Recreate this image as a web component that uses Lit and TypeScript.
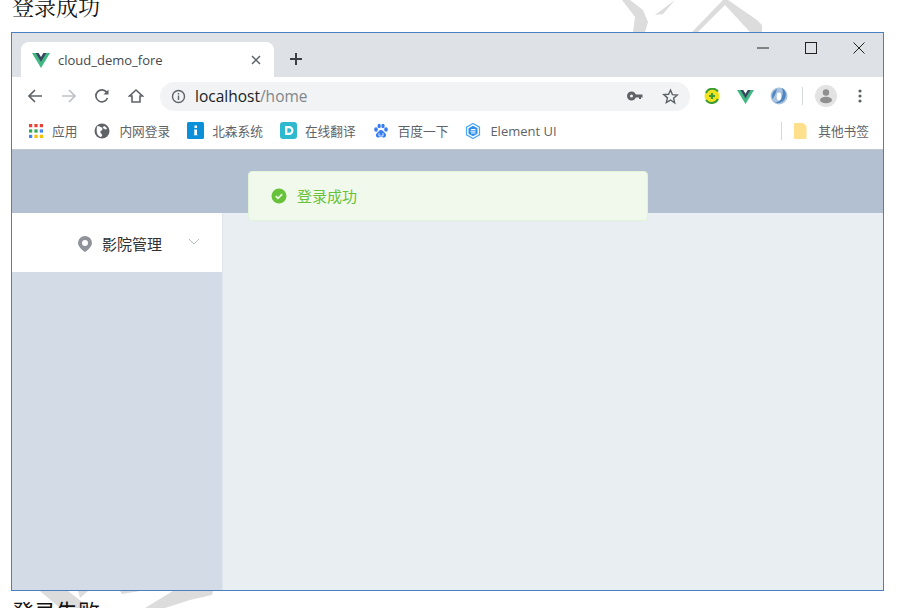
import { LitElement, html, css, svg } from "lit";
import { customElement } from "lit/decorators.js";

const vue = (s: number) => html`<svg width=${s} height=${s} viewBox="0 0 18 18"><path d="M0 2h4l5 8.5L14 2h4L9 17z" fill="#41b883"/><path d="M3.6 2h3L9 6l2.4-4h3L9 11z" fill="#35495e"/></svg>`;

const bookmarks = [
  { label: "应用", icon: svg`<g fill="#e94235"><rect x="0" y="0" width="3" height="3"/><rect x="5" y="0" width="3" height="3"/><rect x="10" y="0" width="3" height="3"/></g><g fill="#34a853"><rect x="0" y="5" width="3" height="3"/><rect x="5" y="5" width="3" height="3"/></g><rect x="10" y="5" width="3" height="3" fill="#4285f4"/><g fill="#fbbc05"><rect x="5" y="10" width="3" height="3"/><rect x="10" y="10" width="3" height="3"/></g><rect x="0" y="10" width="3" height="3" fill="#4285f4"/>`, w: 14, gap: 9, vb: "0 0 13 13" },
  { label: "内网登录", icon: svg`<circle cx="8" cy="8" r="7.5" fill="#5f6368"/><path d="M3.500 3c1.500 0 3 1 4 1.500S9 7 7.500 7.500 6 10 7.500 11 8 13 7 14C5 13.500 3.500 12 3 10S2.500 4.500 3.500 3zM10 3c1.500.5 2.500 1.500 3 3l-2 .5-1-1-1.500-.5z" fill="#fff"/>`, w: 16, gap: 9, vb: "0 0 16 16" },
  { label: "北森系统", icon: svg`<rect width="17" height="17" rx="1.500" fill="#0a8fd8"/><path d="M7.500 3.500h2.500v2.500H7.500zM7 7.500h3v5l1 .8H6.500l.8-.8V8.500z" fill="#fff"/>`, w: 17, gap: 8, vb: "0 0 17 17" },
  { label: "在线翻译", icon: svg`<rect width="17" height="17" rx="3" fill="#2fb9cf"/><path d="M5 4h4a4.500 4.500 0 0 1 0 9H5zm2.300 2.200v4.600H9a2.300 2.300 0 0 0 0-4.600z" fill="#fff"/>`, w: 17, gap: 8, vb: "0 0 17 17" },
  { label: "百度一下", icon: svg`<g fill="#3a7df0"><ellipse cx="3" cy="6" rx="1.800" ry="2.300"/><ellipse cx="6.200" cy="2.500" rx="1.700" ry="2.200"/><ellipse cx="10" cy="2.500" rx="1.700" ry="2.200"/><ellipse cx="13" cy="6" rx="1.800" ry="2.300"/><path d="M8 6.500c2 0 2.500 2 4 3s1.500 4.500-1 4.500c-1.500 0-2-.5-3-.5s-1.500.5-3 .5c-2.500 0-2.500-3.500-1-4.500s2-3 4-3z"/></g><path d="M6 9.500v3h4v-3" fill="none" stroke="#fff" stroke-width=".8"/>`, w: 16, gap: 9, vb: "0 0 16 15" },
  { label: "Element UI", icon: svg`<path d="M8 .5l6.500 3.700v7.600L8 15.500l-6.500-3.700V4.200z" fill="#fff" stroke="#4aa8f5" stroke-width="1.200"/><path d="M8 2.800l4.500 2.500v5.400L8 13.200l-4.500-2.500V5.300z" fill="#2f8ff0"/><path d="M6 6.500h4.500M5.500 8.200h5M6 10h4.500" stroke="#fff" stroke-width="1"/>`, w: 16, gap: 9, vb: "0 0 16 16" },
];

@customElement("app-root")
export class AppRoot extends LitElement {
  static styles = css`
    :host { display: block; position: relative; width: 916px; height: 608px; overflow: hidden; background: #fff;
      font-family: "Noto Sans CJK SC", "Noto Sans", sans-serif; }
    .watermark { position: absolute; left: 0; top: 0; }
    .caption { position: relative; height: 32px; padding-left: 12px; font: 22px/16px "Liberation Serif", "Noto Serif CJK SC", "Noto Sans CJK SC", serif; color: #111; }
    .window { position: relative; margin-left: 11px; width: 871px; height: 557px; border: 1px solid #4a80c0; display: flex; flex-direction: column; background: #fff; }
    .strip { height: 44px; flex: none; background: #dee1e6; display: flex; align-items: flex-end; padding-left: 9px; position: relative; box-sizing: border-box; }
    .tab { width: 253px; height: 35px; background: #fff; border-radius: 8px 8px 0 0; display: flex; align-items: center; padding: 0 13px 0 11px; box-sizing: border-box; gap: 8px; font: 13px "Open Sans", sans-serif; color: #45484c; }
    .tab .title { flex: 1; }
    .plus { margin: 0 0 10px 15px; height: 16px; }
    .winctl { position: absolute; top: 9px; right: 18px; display: flex; gap: 36px; }
    .toolbar { height: 38px; flex: none; display: flex; align-items: center; padding-left: 15px; }
    .nav { display: flex; width: 133px; flex: none; }
    .nav > svg { margin-right: 17.500px; flex: none; }
    .omni { width: 530px; height: 29px; flex: none; box-sizing: border-box; background: #f1f3f4; border-radius: 15px; display: flex; align-items: center; padding: 0 11px; font: 15.500px "Open Sans", sans-serif; color: #202124; gap: 9px; }
    .url { flex: 1; }
    .url span { color: #80868b; }
    .ext { display: flex; align-items: center; margin-left: 14px; flex: 1; }
    .bookmarks { height: 35px; flex: none; box-sizing: border-box; display: flex; align-items: center; padding: 0 0 3px 17px; font-size: 12.700px; color: #5f6368; border-bottom: 1px solid #c4c6c9; }
    .bm { display: flex; align-items: center; margin-right: 17px; white-space: nowrap; }
    .bm.en { font-family: "Open Sans", sans-serif; font-size: 13px; }
    .other { margin-left: auto; display: flex; align-items: center; padding-right: 14px; }
    .other .sep { width: 1px; height: 18px; background: #d5d7da; margin-right: 12px; }
    .other svg { margin-right: 11px; }
    .page { flex: 1; display: flex; flex-direction: column; min-height: 0; }
    .header { height: 63px; flex: none; background: #b3c0d1; }
    .body { flex: 1; display: flex; min-height: 0; }
    .side { width: 210px; flex: none; background: #d3dce6; border-right: 1px solid #e0e5ec; }
    .main { flex: 1; background: #e9eef3; }
    .item { height: 59px; background: #fff; display: flex; align-items: center; padding: 2px 0 0 66px; font-size: 15px; color: #303133; position: relative; box-sizing: border-box; }
    .item .t { margin-left: 10px; }
    .item .chev { position: absolute; right: 22px; top: 25px; }
    .msg { position: absolute; left: 236px; top: 138px; width: 400px; height: 50px; box-sizing: border-box; background: #f0f9eb; border: 1px solid #e1f3d8; border-radius: 4px; display: flex; align-items: center; padding-left: 22px; gap: 10px; font-size: 15px; color: #67c23a; }
    .msg span { padding-bottom: 2px; }
    .next { position: absolute; left: 12px; top: 601px; font: 22px/24px "Liberation Serif", "Noto Sans CJK SC", serif; color: #111; }
  `;

  render() {
    return html`
      <svg class="watermark" width="916" height="608" viewBox="0 0 916 608">
        <g fill="#dcdcdc">
          <path d="M622 0h8l13 10 5 12-3 10h-12l2-15z"/>
          <path d="M655 15l20-15-12 14z"/>
          <path d="M692 32l31-32h5l29 20 5 5v7h-12L725 5 698 32z"/>
          <path d="M40 591h28l22 17H60z"/>
          <path d="M78 591h10l-8 7z"/>
          <path d="M120 591h20l-18 3z"/>
          <path d="M173 591h40l-1 4-22 5-25 8h-20z"/>
        </g>
      </svg>
      <div class="caption">登录成功</div>
      <div class="window">
        <div class="strip">
          <div class="tab">
            ${vue(18)}
            <span class="title">cloud_demo_fore</span>
            <svg width="10" height="10" viewBox="0 0 10 10"><path d="M1 1l8 8M9 1L1 9" stroke="#5f6368" stroke-width="1.500"/></svg>
          </div>
          <svg class="plus" width="14" height="14" viewBox="0 0 14 14"><path d="M7 1v12M1 7h12" stroke="#3c4043" stroke-width="2"/></svg>
          <div class="winctl">
            <svg width="12" height="12" viewBox="0 0 12 12"><path d="M0 6h12" stroke="#222" stroke-width="1"/></svg>
            <svg width="12" height="12" viewBox="0 0 12 12"><rect x=".5" y=".5" width="11" height="11" fill="none" stroke="#222"/></svg>
            <svg width="12" height="12" viewBox="0 0 12 12"><path d="M.5.500l11 11M11.500.500l-11 11" stroke="#222"/></svg>
          </div>
        </div>
        <div class="toolbar">
          <div class="nav">
            <svg width="16" height="16" viewBox="0 0 16 16"><path d="M15 8H2M8 2L2 8l6 6" fill="none" stroke="#5f6368" stroke-width="1.700"/></svg>
            <svg width="16" height="16" viewBox="0 0 16 16"><path d="M1 8h13M8 2l6 6-6 6" fill="none" stroke="#bdc1c6" stroke-width="1.700"/></svg>
            <svg width="16" height="16" viewBox="0 0 16 16"><path d="M13.500 10a6 6 0 1 1-.6-5.500" fill="none" stroke="#5f6368" stroke-width="1.700"/><path d="M14.500 1.500v5h-5z" fill="#5f6368"/></svg>
            <svg width="16" height="16" viewBox="0 0 16 16"><path d="M8 2L1.500 8H4v6h8V8h2.500z" fill="none" stroke="#5f6368" stroke-width="1.600"/></svg>
          </div>
          <div class="omni">
            <svg width="15" height="15" viewBox="0 0 15 15"><circle cx="7.500" cy="7.500" r="6" fill="none" stroke="#5f6368" stroke-width="1.400"/><path d="M7.500 6.500v4.500M7.500 4v1.500" stroke="#5f6368" stroke-width="1.400"/></svg>
            <div class="url">localhost<span>/home</span></div>
            <svg width="16" height="10" viewBox="0 0 16 10" style="margin-right:10px"><circle cx="4.500" cy="5" r="3" fill="none" stroke="#5f6368" stroke-width="3"/><path d="M8 3.500h7.500v3H14V8h-2V6.500H8z" fill="#5f6368"/></svg>
            <svg width="17" height="17" viewBox="0 0 24 24"><path d="M12 3l2.700 6.300 6.800.6-5.200 4.500 1.600 6.700L12 17l-5.900 3.600 1.600-6.700-5.200-4.500 6.800-.6z" fill="none" stroke="#5f6368" stroke-width="2"/></svg>
          </div>
          <div class="ext">
            <svg width="16" height="16" viewBox="0 0 16 16"><circle cx="8" cy="8" r="7.500" fill="#f2e21c"/><path d="M2 5a7 7 0 0 1 12-1.500M14 11a7 7 0 0 1-12 1" fill="none" stroke="#3d9b35" stroke-width="2"/><path d="M8 5v6M5 8h6" stroke="#3d9b35" stroke-width="2.200"/></svg>
            <span style="display:flex;margin-left:17px">${vue(17)}</span>
            <svg width="18" height="18" viewBox="0 0 18 18" style="margin-left:16px"><circle cx="9" cy="9" r="8.500" fill="#a9c3de"/><path d="M12 1c3.500 2 5 6 3 10.500S8 17 4.500 15.500c4 0 6.500-2.500 7.500-6s1-5 0-8.500z" fill="#4f86c2"/><path d="M7 2C3.500 3.500 1 7 2.500 12 4.500 9 6 6 7 2z" fill="#4f86c2"/><ellipse cx="9" cy="9.500" rx="2.300" ry="4" fill="#fff"/></svg>
            <div style="width:1px;height:18px;background:#d5d7da;margin-left:14px"></div>
            <svg width="22" height="22" viewBox="0 0 22 22" style="margin-left:12px"><circle cx="11" cy="11" r="11" fill="#e3e3e3"/><circle cx="11" cy="7.500" r="3.200" fill="#8f8f8f"/><ellipse cx="11" cy="15" rx="6" ry="3.300" fill="#8f8f8f"/></svg>
            <svg width="4" height="14" viewBox="0 0 4 14" style="margin-left:21px"><g fill="#5f6368"><circle cx="2" cy="2" r="1.600"/><circle cx="2" cy="7" r="1.600"/><circle cx="2" cy="12" r="1.600"/></g></svg>
          </div>
        </div>
        <div class="bookmarks">
          ${bookmarks.map(b => html`<div class="bm ${b.label.startsWith("El") ? "en" : ""}"><svg width=${b.w} height=${b.w} viewBox=${b.vb} style="margin-right:${b.gap}px">${b.icon}</svg>${b.label}</div>`)}
          <div class="other">
            <div class="sep"></div>
            <svg width="13" height="16" viewBox="0 0 13 16"><path d="M1 0h8l3.500 3v12a1 1 0 0 1-1 1H1a1 1 0 0 1-1-1V1a1 1 0 0 1 1-1z" fill="#fddf8c"/></svg>
            其他书签
          </div>
        </div>
        <div class="page">
          <div class="header"></div>
          <div class="body">
            <div class="side">
              <div class="item">
                <svg width="14" height="16" viewBox="0 0 14 16"><path fill-rule="evenodd" d="M7 0a7 7 0 0 1 7 7c0 3.500-4 7-7 9-3-2-7-5.500-7-9a7 7 0 0 1 7-7zm0 4a3 3 0 1 0 0 6 3 3 0 0 0 0-6z" fill="#909399"/></svg>
                <span class="t">影院管理</span>
                <svg class="chev" width="12" height="8" viewBox="0 0 12 8"><path d="M1 1l5 5 5-5" fill="none" stroke="#b8bcc4" stroke-width="1"/></svg>
              </div>
            </div>
            <div class="main"></div>
          </div>
        </div>
        <div class="msg">
          <svg width="16" height="16" viewBox="0 0 16 16"><circle cx="8" cy="8" r="7.500" fill="#67c23a"/><path d="M4.700 8.200l2.300 2.200 4.200-4.300" fill="none" stroke="#f0f9eb" stroke-width="1.600"/></svg>
          <span>登录成功</span>
        </div>
      </div>
      <div class="next">登录失败</div>
    `;
  }
}
